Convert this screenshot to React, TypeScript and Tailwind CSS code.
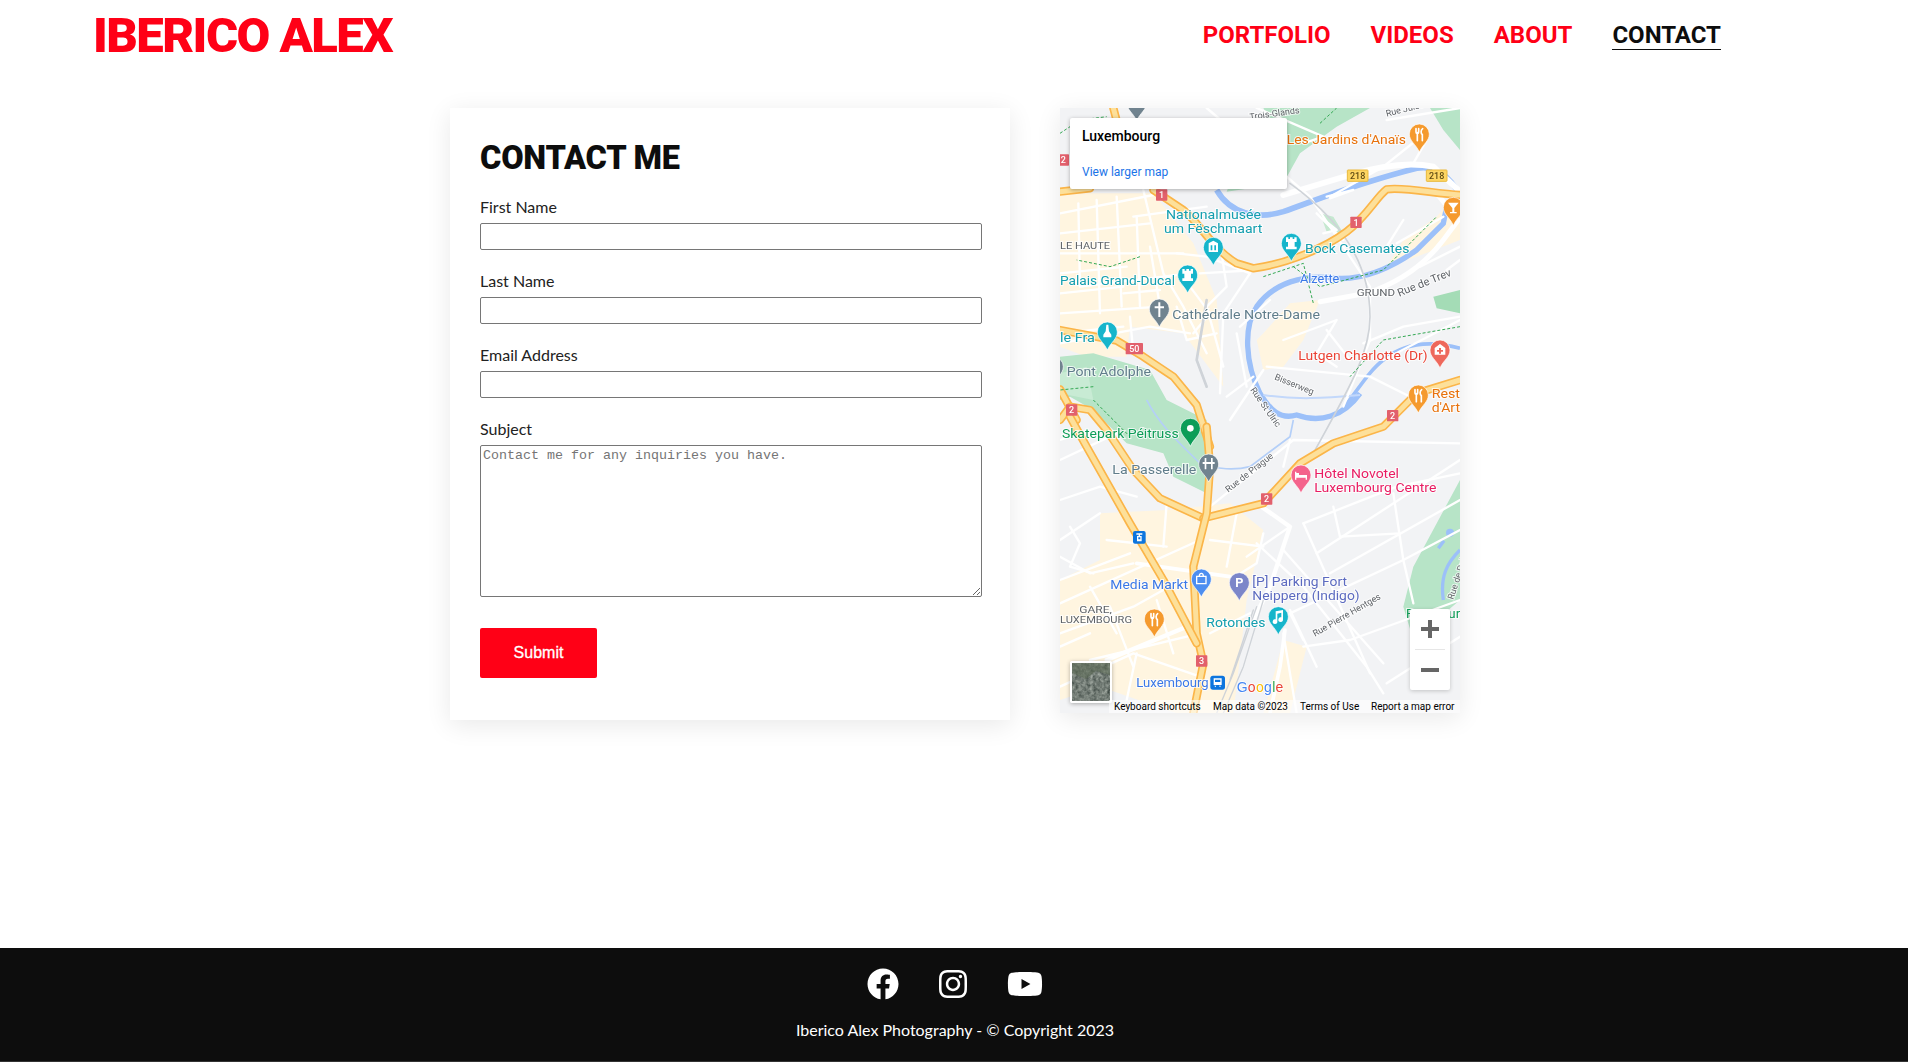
import React from "react";
import { FaFacebook, FaInstagram, FaYoutube } from "react-icons/fa";

const ROBOTO = "font-['Roboto',sans-serif]";

function Field({ label }: { label: string }) {
  return (
    <div className="mb-[18px]">
      <label className="block h-[26px] font-['Lato',sans-serif] text-[16px] leading-[26px] text-[#222]">{label}</label>
      <input className="mt-[3px] block h-[27px] w-full rounded-[2px] border border-[#767676] bg-white" />
    </div>
  );
}

type PinProps = { x: number; y: number; c: string; children?: React.ReactNode };
function Pin({ x, y, c, children }: PinProps) {
  return (
    <g transform={`translate(${x} ${y})`}>
      <path d="M-30 0a30 30 0 1 1 60 0c0 21-19 30-30 54c-11-24-30-33-30-54z" fill={c} stroke="#fff" strokeWidth="2" />
      {children}
    </g>
  );
}

const Fork = () => (
  <g fill="none" stroke="#fff" strokeWidth="5" strokeLinecap="round">
    <path d="M-10 -16v10a4 4 0 0 0 8 0v-10M-6 -4v24M10 -16c-6 4-6 14-1 18v18" />
  </g>
);
const Castle = () => (
  <path d="M-16 -18h7v5h5v-5h8v5h5v-5h7v14h-6v14h6v8h-32v-8h6v-14h-6z" fill="#fff" />
);

function Label({ x, y, c, t, s = 40, w }: { x: number; y: number; c: string; t: string; s?: number; w?: number }) {
  return (
    <text x={x} y={y} fill={c} fontSize={s} fontFamily="Roboto, sans-serif" stroke="#fff" strokeWidth="6" strokeOpacity="0.75" paintOrder="stroke" textLength={w} lengthAdjust="spacingAndGlyphs">
      {t}
    </text>
  );
}
function Shield({ x, y, t, yellow }: { x: number; y: number; t: string; yellow?: boolean }) {
  const wd = yellow ? 62 : t.length > 1 ? 52 : 34;
  return (
    <g>
      <rect x={x - wd / 2} y={y - 17} width={wd} height={34} fill={yellow ? "#fdd663" : "#e2606c"} stroke={yellow ? "#eab93c" : "none"} strokeWidth="3" rx="2" />
      <text x={x} y={y + 10} fontSize="27" fontWeight="500" textAnchor="middle" fontFamily="Roboto, sans-serif" fill={yellow ? "#5f4b14" : "#fff"}>{t}</text>
    </g>
  );
}
function Road({ d, w = 7, c = "#fff" }: { d: string; w?: number; c?: string }) {
  return <path d={d} fill="none" stroke={c} strokeWidth={w} strokeLinejoin="round" strokeLinecap="round" />;
}
function Highway({ d }: { d: string }) {
  return (
    <g>
      <path d={d} fill="none" stroke="#fbb548" strokeWidth="25" strokeLinejoin="round" strokeLinecap="round" />
      <path d={d} fill="none" stroke="#fde09a" strokeWidth="15" strokeLinejoin="round" strokeLinecap="round" />
    </g>
  );
}

const thinRoads = [
  "M30 340L310 285M85 310L90 560M200 290L215 620M30 460L400 460M30 640L330 620M90 560L420 520M250 350L470 320",
  "M280 270L340 520L400 620L470 760M30 730L300 680L420 700M220 580L330 570M240 650L250 760M380 460L470 470L600 520",
  "M140 300L150 640M30 400L300 370M30 520L230 500M30 580L220 560M260 350L270 620M30 700L220 680M300 440L330 620",
  "M510 430L530 560L470 620L520 800M600 520L520 640L510 880M560 700L590 860M450 520L620 510M660 600L570 680",
  "M470 24L780 290L960 560L960 720L880 920M620 24L820 110L760 130M830 290L910 270L840 295",
  "M800 340L880 420M810 350L860 390L820 400M1010 60L1230 24M1100 120L1000 200L840 290M1130 120L1090 190",
  "M700 720L860 660L800 760L860 800M830 690L900 780M610 830L530 890M650 800L960 830L1100 900M1000 780L1230 660",
  "M940 730L1060 680L1230 650M1230 480L1190 510M1060 360L1010 440M1040 430L1180 350M1230 440L1110 500",
  "M540 960L640 810M380 620L410 720L500 700M420 560L480 640L430 700",
];
const thinRoads2 = [
  "M30 180L200 100M30 300L150 260L260 290M150 340L30 420M350 310L340 440M30 610L450 420M250 490L120 520L30 470",
  "M60 380L90 430L60 500L130 520M560 340L530 500M640 400L620 490L540 540M720 380L590 470M170 420L350 440M30 540L240 460",
  "M480 320L730 120L1230 130M720 120L700 200M760 370L1040 260L1230 220M1030 280L1060 480L1090 610",
  "M760 370L960 820M850 320L870 410L1050 400M700 450L1000 790M1230 390L1060 480L720 640L760 720M1230 600L900 720L760 740",
  "M30 700L250 620L340 570M30 740L120 700M120 780L450 700M30 860L250 760L450 830M260 760L230 900M480 700L600 640",
  "M620 430L760 560L950 800L1000 880M1010 850L1230 710M720 630L800 800M700 700L740 940M840 520L1230 300M800 460L1230 180",
  "M180 620L250 800M120 560L200 700M320 600L370 760M480 420L640 440M30 120L90 100L170 240",
];

function MapArt() {
  return (
    <svg viewBox="0 0 400 605" className="block h-full w-full">
      <defs>
        <filter id="blurMap" x="0" y="0" width="100%" height="100%">
          <feGaussianBlur stdDeviation="0.3" />
        </filter>
      </defs>
      <rect width="400" height="605" fill="#f2f3f5" />
      <g transform="translate(-10 -8) scale(0.33333)" filter="url(#blurMap)">
        {/* city blocks */}
        <path d="M30 280H310L430 430L500 600L520 860L400 700L240 680L230 770H110L30 740Z" fill="#fff5e0" />
        <path d="M640 700L720 610L810 600L760 720L700 800L640 810L620 720Z" fill="#fff5e0" />
        <path d="M1010 500L1060 420L1160 350L1230 270V420L1100 470Z" fill="#fff5e0" />
        <path d="M30 1440L150 1380L150 1240L350 1230L540 1210L640 1290L590 1500L550 1840L380 1840L150 1760L30 1800Z" fill="#fff5e0" />
        <path d="M700 1620L770 1640L720 1840H640Z" fill="#fff5e0" />
        {/* parks */}
        <path d="M640 24H960L860 80L750 160L700 250L530 275L540 250L710 150Z" fill="#b7e4c7" />
        <path d="M1140 24H1230V150L1180 90Z" fill="#b7e4c7" />
        <path d="M1150 590L1230 570V640L1160 625Z" fill="#a4dcb6" />
        <path d="M810 340L850 350L880 400L830 395Z" fill="#c5e8d0" />
        <path d="M30 770L130 760L300 810L350 900L470 960V1180L370 1130L340 1060L230 1030L130 930L60 890L30 900Z" fill="#b7e4c7" />
        <path d="M30 820L110 800L130 900L30 880Z" fill="#c8ebd4" />
        <path d="M1230 1140V1500L1090 1620L1060 1520L1090 1400Z" fill="#b7e4c7" />
        {/* water */}
        <path d="M500 270C540 340 620 360 700 335C800 300 920 250 1100 205C1170 190 1210 250 1230 285" fill="none" stroke="#9cc0f9" strokeWidth="17" />
        <path d="M1190 320L1180 370L1100 450C1030 500 950 540 860 535C760 520 670 550 620 620C580 680 585 790 630 880C660 930 690 960 740 945C810 970 880 950 930 880" fill="none" stroke="#9cc0f9" strokeWidth="16" />
        <path d="M1230 745C1140 720 1060 730 1000 780C960 810 930 860 880 925" fill="none" stroke="#9cc0f9" strokeWidth="11" />
        <path d="M640 885C740 900 820 895 930 885" fill="none" stroke="#c3d8fb" strokeWidth="6" />
        <path d="M290 900C330 980 400 1040 450 1090C500 1110 560 1110 600 1100L720 1010L730 960" fill="none" stroke="#b4cff8" strokeWidth="5" />
        <path d="M1230 1350C1190 1390 1170 1430 1180 1500" fill="none" stroke="#9cc0f9" strokeWidth="10" />
        <circle cx="1200" cy="1298" r="12" fill="#9cc0f9" />
        <path d="M1165 1345L1182 1322" stroke="#9cc0f9" strokeWidth="10" />
        {/* roads */}
        {thinRoads.map((d) => <Road key={d} d={d} />)}
        <g transform="translate(0 900)">{thinRoads2.map((d) => <Road key={d} d={d} />)}</g>
        <Road d="M700 285L900 225C1000 195 1080 185 1150 200L1230 275" w={18} />
        <Road d="M810 605L950 580C1040 550 1120 500 1180 420L1225 360L1160 280" w={15} />
        <Road d="M620 1210L720 1280L660 1460L610 1560" w={13} />
        <Road d="M170 1680L410 1580" w={13} />
        <Road d="M260 1390L540 1430" w={11} />
        <Road d="M705 1590L690 1700L660 1840" w={11} />
        {/* rail */}
        <Road d="M470 600L440 780L470 860" w={8} c="#cfd3d8" />
        <Road d="M720 250C860 350 960 480 960 650C960 760 900 860 790 1060" w={5} c="#cfd3d8" />
        <Road d="M640 1500L580 1700L520 1840M620 1520L550 1720L500 1840M610 1530L540 1740" w={4} c="#cfd3d8" />
        {/* highways */}
        <Highway d="M190 24L210 100L250 190" />
        <Highway d="M30 275L120 265" />
        <Highway d="M310 270L400 330C450 370 490 450 560 490L610 505C720 490 830 440 890 395C950 350 980 290 1010 268C1060 260 1150 280 1230 285" />
        <Highway d="M30 690L200 722L280 770L370 830L440 915L480 1040" />
        <Highway d="M30 868L80 960" />
        <Highway d="M30 960L60 920L120 930L170 990L250 1110L330 1195L460 1255" />
        <Highway d="M460 1255L640 1210L750 1090L850 1030L1000 980L1060 920L1100 880L1230 840" />
        <Highway d="M470 980L480 1100L470 1240L430 1400L440 1600L460 1690L430 1840" />
        <Highway d="M60 950L110 1040L240 1270L340 1440L440 1630" />
        {/* footpaths */}
        <path d="M30 100L90 60L170 50M810 70L860 24M270 470L180 500L80 480M640 530L760 490L790 610M730 500L810 560L1000 510L1160 350M1230 680L1000 720L900 830" fill="none" stroke="#34a853" strokeWidth="3" strokeDasharray="9 6" />
        <path d="M130 900L240 1010M130 860L30 870" fill="none" stroke="#34a853" strokeWidth="3" strokeDasharray="9 6" />
        {/* shields */}
        <Shield x={335} y={285} t="1" />
        <Shield x={918} y={367} t="1" />
        <Shield x={40} y={180} t="2" />
        <Shield x={253} y={746} t="50" />
        <Shield x={65} y={930} t="2" />
        <Shield x={1028} y={947} t="2" />
        <Shield x={650} y={1197} t="2" />
        <Shield x={455} y={1683} t="3" />
        <Shield x={923} y={227} t="218" yellow />
        <Shield x={1160} y={227} t="218" yellow />
        {/* road and area text */}
        <g transform="rotate(-8 600 60)"><Label x={600} y={60} c="#5f6368" t="Trois-Glands" s={27} /></g>
        <g transform="rotate(-14 1010 50)"><Label x={1010} y={50} c="#5f6368" t="Rue Jules" s={27} /></g>
        <Label x={30} y={446} c="#5f6368" t="LE HAUTE" s={27} w={150} />
        <Label x={920} y={588} c="#5f6368" t="GRUND" s={27} w={115} />
        <g transform="rotate(-22 1048 590)"><Label x={1048} y={590} c="#5f6368" t="Rue de Trev" s={33} /></g>
        <g transform="rotate(22 672 838)"><Label x={672} y={838} c="#5f6368" t="Bisserweg" s={27} /></g>
        <g transform="rotate(55 600 870)"><Label x={600} y={870} c="#5f6368" t="Rue St Ulric" s={27} /></g>
        <g transform="rotate(-38 535 1178)"><Label x={535} y={1178} c="#5f6368" t="Rue de Prague" s={27} /></g>
        <g transform="rotate(-30 795 1610)"><Label x={795} y={1610} c="#5f6368" t="Rue Pierre Hentges" s={27} /></g>
        <g transform="rotate(-72 1210 1500)"><Label x={1210} y={1500} c="#5f6368" t="Rue de Pulve" s={27} /></g>
        <Label x={88} y={1540} c="#5f6368" t="GARE," s={28} w={98} />
        <Label x={30} y={1568} c="#5f6368" t="LUXEMBOURG" s={28} w={216} />
        <Label x={1068} y={1555} c="#0f9d58" t="Pa" s={40} />
        <Label x={1195} y={1555} c="#0f9d58" t="ur" s={40} />
        {/* POI labels */}
        <Label x={710} y={132} c="#e8710a" t="Les Jardins d'Anaïs" w={358} />
        <Label x={348} y={358} c="#129eaf" t="Nationalmusée" w={285} />
        <Label x={342} y={400} c="#129eaf" t="um Fëschmaart" w={295} />
        <Label x={765} y={458} c="#129eaf" t="Bock Casemates" w={313} />
        <Label x={30} y={555} c="#129eaf" t="Palais Grand-Ducal" w={345} />
        <Label x={750} y={548} c="#3b78e7" t="Alzette" w={118} />
        <Label x={367} y={657} c="#607d8b" t="Cathédrale Notre-Dame" w={443} />
        <Label x={30} y={725} c="#129eaf" t="le Fra" w={105} />
        <Label x={50} y={828} c="#607d8b" t="Pont Adolphe" w={253} />
        <Label x={745} y={780} c="#ea4335" t="Lutgen Charlotte (Dr)" w={388} />
        <Label x={1145} y={894} c="#e8710a" t="Rest" w={85} />
        <Label x={1145} y={936} c="#e8710a" t="d'Art" w={85} />
        <Label x={36} y={1013} c="#0f9d58" t="Skatepark Péitruss" w={350} />
        <Label x={187} y={1122} c="#607d8b" t="La Passerelle" w={252} />
        <Label x={793} y={1134} c="#e91e63" t="Hôtel Novotel" w={254} />
        <Label x={793} y={1176} c="#e91e63" t="Luxembourg Centre" w={366} />
        <Label x={181} y={1466} c="#3b78e7" t="Media Markt" w={233} />
        <Label x={607} y={1458} c="#5c6bc0" t="[P] Parking Fort" w={284} />
        <Label x={607} y={1500} c="#5c6bc0" t="Neipperg (Indigo)" w={322} />
        <Label x={469} y={1581} c="#129eaf" t="Rotondes" w={177} />
        <Label x={259} y={1760} c="#3b78e7" t="Luxembourg" w={217} />
        {/* pins */}
        <Pin x={260} y={8} c="#70838f" />
        <Pin x={1108} y={102} c="#f59a2f"><Fork /></Pin>
        <Pin x={1210} y={322} c="#f59a2f"><path d="M-16 -14H16L3 2V14H10V18H-10V14H-3V2Z" fill="#fff" /></Pin>
        <Pin x={490} y={442} c="#12b5cb"><path d="M-14 -12L0 -20L14 -12V14H-14ZM-8 -6V9H-3V-6ZM3 -6V9H8V-6Z" fill="#fff" fillRule="evenodd" /></Pin>
        <Pin x={724} y={430} c="#12b5cb"><Castle /></Pin>
        <Pin x={413} y={525} c="#12b5cb"><Castle /></Pin>
        <Pin x={328} y={627} c="#70838f"><path d="M-3 -20H3V-8H14V-2H3V24H-3V-2H-14V-8H-3Z" fill="#fff" /></Pin>
        <Pin x={172} y={696} c="#12b5cb"><path d="M-3 -22H3L5 -2L12 8V16H-12V8L-5 -2Z" fill="#fff" /></Pin>
        <Pin x={10} y={800} c="#70838f" />
        <Pin x={1170} y={750} c="#ee675c"><path d="M0 -18L16 -6V14H-16V-6ZM-3 -6V0H-9V5H-3V11H3V5H9V0H3V-6Z" fill="#fff" fillRule="evenodd" /></Pin>
        <Pin x={1105} y={885} c="#f59a2f"><Fork /></Pin>
        <Pin x={421} y={985} c="#0f9d58"><circle r="10" fill="#fff" /></Pin>
        <Pin x={476} y={1092} c="#70838f"><path d="M-18 -6H18V0H12V16H7V0H-7V16H-12V0H-18ZM-12 -18H-7V-6H-12ZM7 -18H12V-6H7Z" fill="#fff" /></Pin>
        <Pin x={753} y={1125} c="#f4648c"><path d="M-18 -10V14H-14V8H14V14H18V0H-6V-6H-14V-10Z" fill="#fff" /></Pin>
        <Pin x={454} y={1437} c="#4e8ef0"><path d="M-14 -8H14V14H-14ZM-6 -8C-6 -20 6 -20 6 -8" fill="none" stroke="#fff" strokeWidth="4" /></Pin>
        <Pin x={568} y={1448} c="#7b86c9"><text y="14" textAnchor="middle" fontSize="38" fontWeight="700" fontFamily="Roboto, sans-serif" fill="#fff">P</text></Pin>
        <Pin x={313} y={1557} c="#f59a2f"><Fork /></Pin>
        <Pin x={685} y={1550} c="#12b5cb"><path d="M-8 -16L14 -20V8A7 7 0 1 1 9 2V-12L-3 -9V14A7 7 0 1 1 -8 8Z" fill="#fff" /></Pin>
        {/* transit squares */}
        <rect x={249} y={1293} width={38} height={38} rx={6} fill="#0b74de" />
        <path d="M259 1300H277V1304H270V1308H275V1324H261V1308H266V1304H259ZM265 1312V1318H271V1312Z" fill="#fff" fillRule="evenodd" />
        <rect x={481} y={1727} width={44} height={42} rx={8} fill="#0b74de" />
        <path d="M491 1735H515V1755H491ZM495 1739V1746H511V1739ZM493 1757H499L496 1762ZM507 1757H513L510 1762Z" fill="#fff" fillRule="evenodd" />
        {/* Google wordmark */}
        <text x={560} y={1777} fontSize="42" fontFamily="Liberation Sans, sans-serif" stroke="#fff" strokeWidth="4" paintOrder="stroke" textLength={140}>
          <tspan fill="#4285f4">G</tspan><tspan fill="#ea4335">o</tspan><tspan fill="#fbbc05">o</tspan><tspan fill="#4285f4">g</tspan><tspan fill="#34a853">l</tspan><tspan fill="#ea4335">e</tspan>
        </text>
      </g>
    </svg>
  );
}

function Satellite() {
  return (
    <svg viewBox="0 0 38 38" className="block h-full w-full">
      <defs>
        <filter id="sat" x="0" y="0" width="100%" height="100%">
          <feTurbulence type="fractalNoise" baseFrequency="0.28" numOctaves="3" seed="7" />
          <feColorMatrix values="0 0 0 0 0.36  0 0 0 0 0.40  0 0 0 0 0.36  0.9 0.9 0 0 -0.35" />
        </filter>
      </defs>
      <rect width="38" height="38" fill="#3a4540" />
      <rect width="38" height="38" filter="url(#sat)" />
      <path d="M0 10L14 16L24 8L38 12V0H0Z" fill="#5d6b55" opacity="0.55" />
    </svg>
  );
}

export default function App() {
  return (
    <div className="flex h-[1062px] flex-col overflow-hidden bg-white">
      <header className="flex h-[70px] items-center justify-between pl-[93px] pr-[187px]">
        <div className={`${ROBOTO} text-[49px] font-black leading-none tracking-[-1.55px] text-[#ff0016]`}>IBERICO ALEX</div>
        <nav className={`${ROBOTO} flex gap-[40px] text-[24px] font-bold leading-[28px]`}>
          <a className="text-[#ff0016]">PORTFOLIO</a>
          <a className="text-[#ff0016]">VIDEOS</a>
          <a className="text-[#ff0016]">ABOUT</a>
          <a className="border-b-[1px] border-[#0d0d0d] text-[#0d0d0d]">CONTACT</a>
        </nav>
      </header>

      <main className="flex flex-1 items-start justify-center gap-[50px] pl-[2px] pt-[38px]">
        <form className="h-[612px] w-[560px] bg-white pl-[30px] pr-[28px] pt-[30px] shadow-[0_5px_24px_rgba(0,0,0,0.09)]">
          <h1 className={`${ROBOTO} mb-[16px] h-[40px] text-[32.5px] font-black leading-[40px] tracking-[-0.2px] text-[#0d0d0d]`}>CONTACT ME</h1>
          <Field label="First Name" />
          <Field label="Last Name" />
          <Field label="Email Address" />
          <label className="block h-[26px] font-['Lato',sans-serif] text-[16px] leading-[26px] text-[#222]">Subject</label>
          <textarea
            className="mt-[3px] block h-[152px] w-full rounded-[2px] border border-[#767676] bg-white p-[2px] font-['Liberation_Mono',monospace] text-[13.333px] leading-[15px] placeholder:text-[#757575]"
            placeholder="Contact me for any inquiries you have."
          />
          <button type="button" className="mt-[31px] h-[50px] w-[117px] rounded-[2px] bg-[#ff0016] font-['Liberation_Sans',sans-serif] text-[16px] text-white [-webkit-text-stroke:0.3px_white]">
            Submit
          </button>
        </form>

        <div className="relative h-[605px] w-[400px] shadow-[0_5px_24px_rgba(0,0,0,0.09)]">
          <MapArt />
          <div className={`${ROBOTO} absolute left-[10px] top-[10px] h-[71px] w-[217px] rounded-[2px] bg-white pl-[12px] pt-[9px] shadow-[0_1px_4px_rgba(0,0,0,0.3)]`}>
            <div className="text-[14px] font-medium leading-[18px] text-black">Luxembourg</div>
            <div className="mt-[19px] text-[12px] leading-[16px] text-[#1a73e8]">View larger map</div>
          </div>
          <div className="absolute bottom-[10px] left-[10px] h-[42px] w-[42px] rounded-[2px] border-2 border-white shadow-[0_1px_4px_rgba(0,0,0,0.3)]">
            <Satellite />
          </div>
          <div className="absolute left-[350px] top-[501px] flex h-[81px] w-[40px] flex-col items-center rounded-[2px] bg-white shadow-[0_1px_4px_rgba(0,0,0,0.2)]">
            <svg viewBox="0 0 40 40" className="h-[40px] w-[40px]"><path d="M18 11H22V18H29V22H22V29H18V22H11V18H18Z" fill="#666" /></svg>
            <div className="h-px w-[30px] bg-[#e6e6e6]" />
            <svg viewBox="0 0 40 40" className="h-[40px] w-[40px]"><path d="M11 18H29V22H11Z" fill="#666" /></svg>
          </div>
          <div className={`${ROBOTO} absolute bottom-0 left-[49px] right-0 flex h-[13px] items-center bg-white/60 pl-[5px] text-[10px] leading-[13px] text-black`}>
            <span className="w-[99px]">Keyboard shortcuts</span>
            <span className="w-[87px]">Map data ©2023</span>
            <span className="w-[71px]">Terms of Use</span>
            <span>Report a map error</span>
          </div>
        </div>
      </main>

      <footer className="flex h-[114px] flex-col items-center border-b border-[#333] bg-[#0d0d0d] pl-[2px] pt-[20px] text-white">
        <div className="flex items-center gap-[40px]">
          <FaFacebook className="h-[32px] w-[32px]" />
          <FaInstagram className="h-[32px] w-[28px]" />
          <FaYoutube className="h-[32px] w-[36px]" />
        </div>
        <p className="mt-[17px] font-['Lato',sans-serif] text-[16px] leading-[26px]">Iberico Alex Photography - © Copyright 2023</p>
      </footer>
    </div>
  );
}
